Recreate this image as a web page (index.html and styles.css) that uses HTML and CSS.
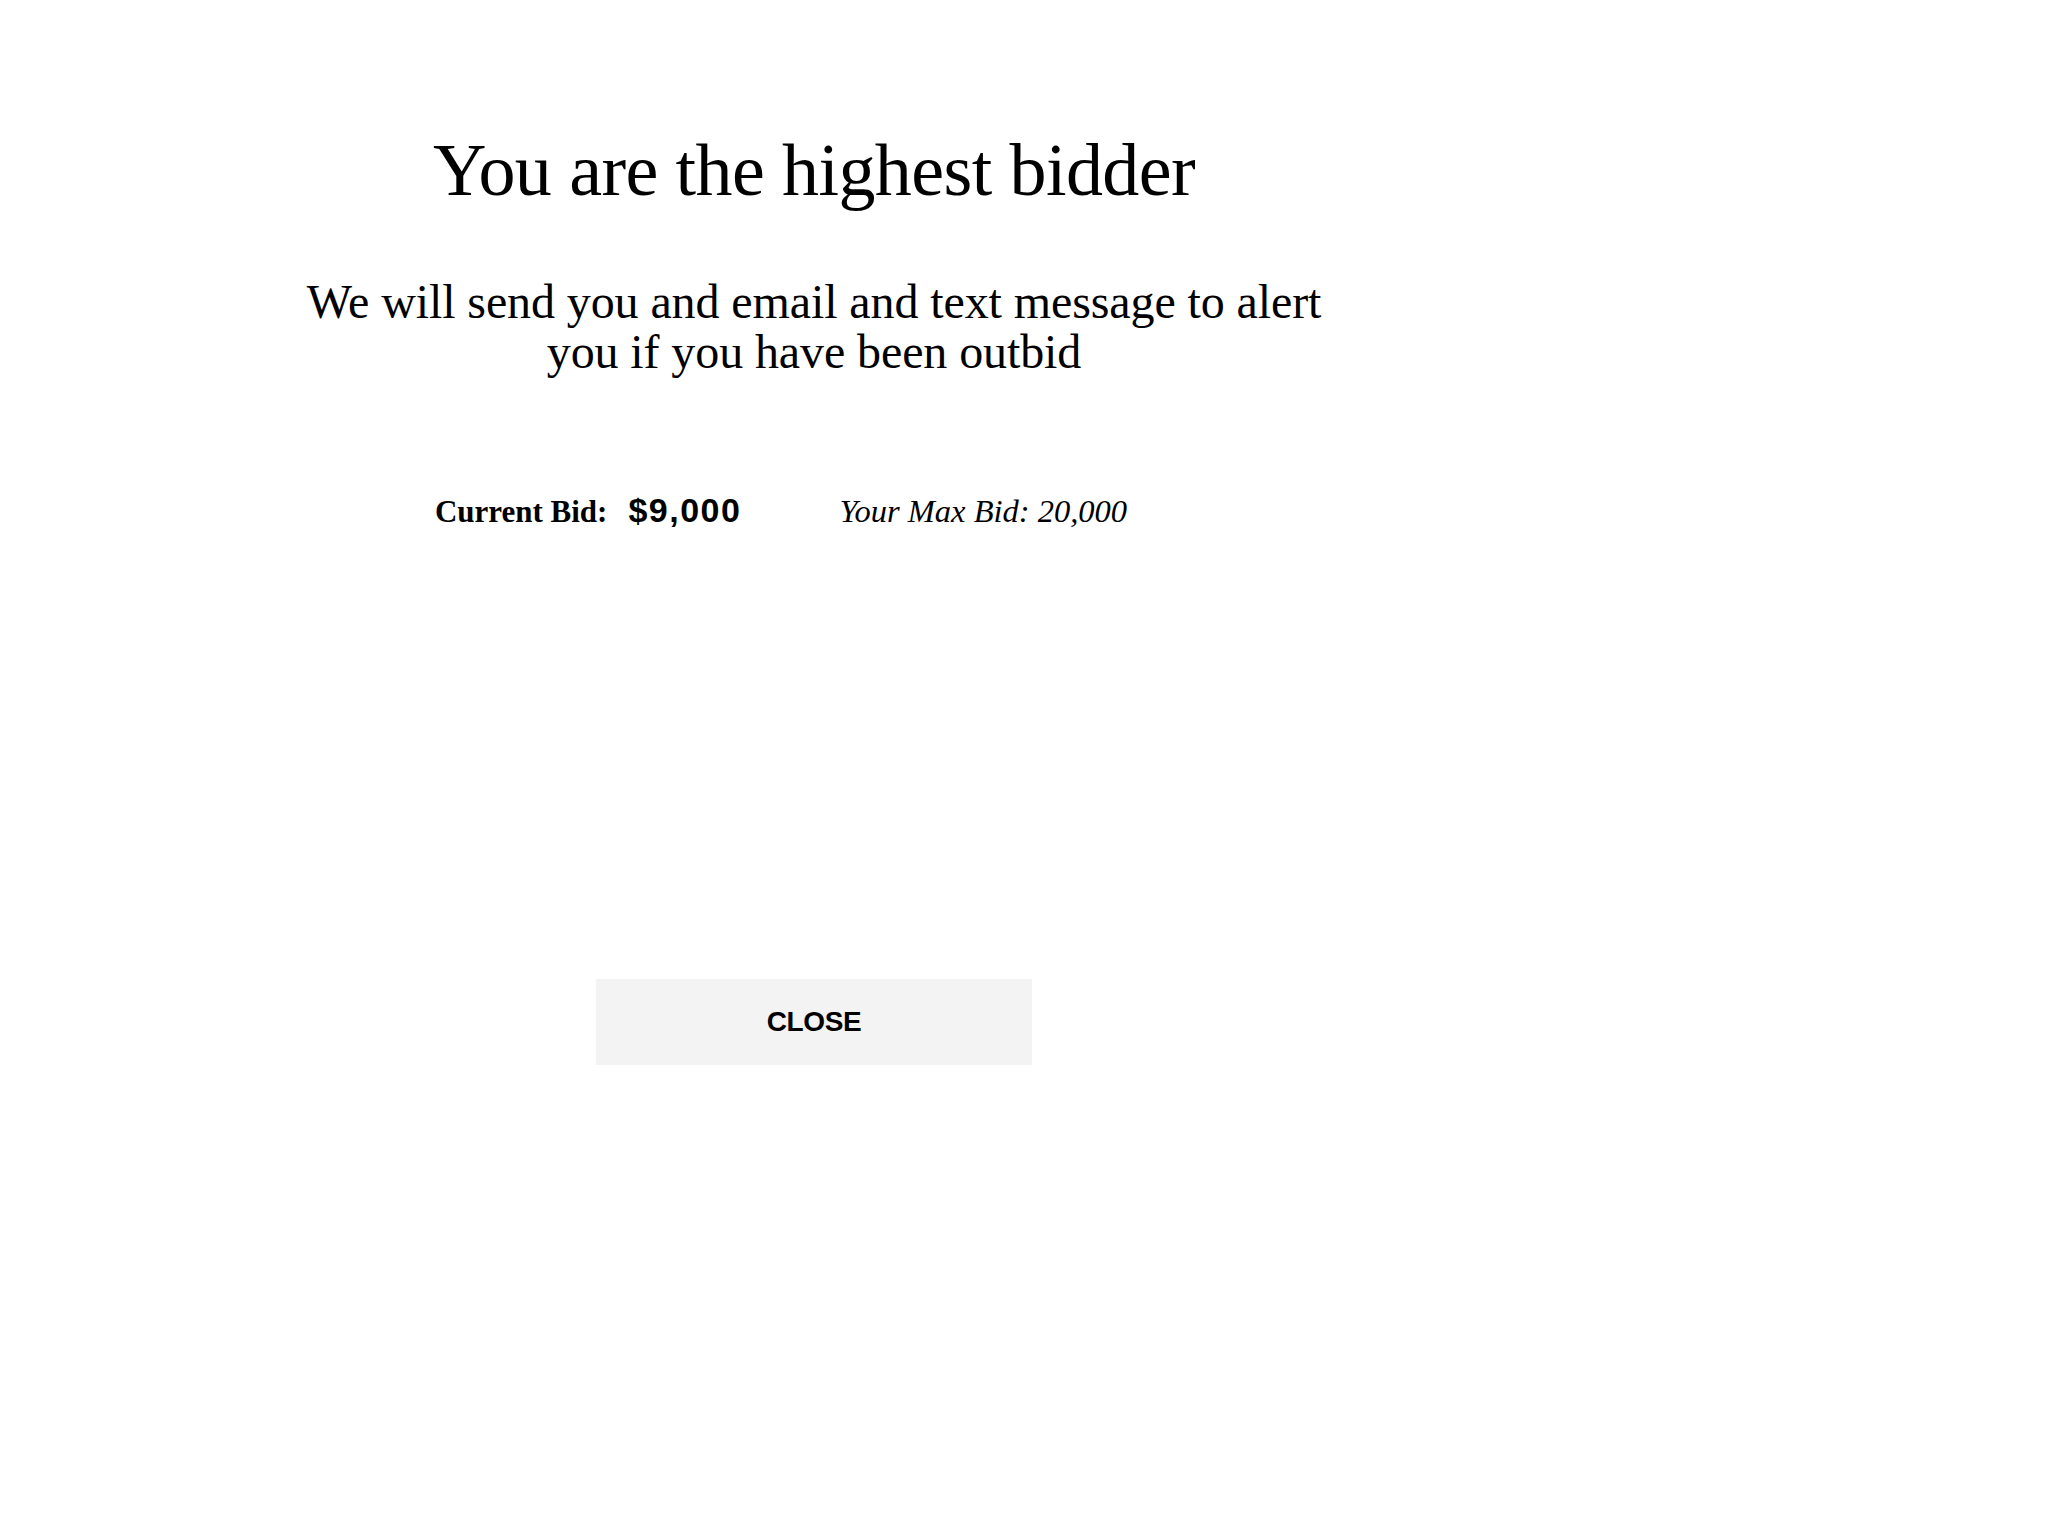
FILE: index.html
```html
<!DOCTYPE html>
<html lang="en">
<head>
<meta charset="utf-8">
<title>You are the highest bidder</title>
<link rel="stylesheet" href="styles.css">
</head>
<body>
<main class="modal">
  <h1 class="title">You are the highest bidder</h1>
  <p class="subtitle">We will send you and email and text message to alert you if you have been outbid</p>
  <div class="bids">
    <div class="current">
      <span class="current-label">Current Bid:</span>
      <span class="current-value">$9,000</span>
    </div>
    <span class="max-bid">Your Max Bid: 20,000</span>
  </div>
  <button class="close-btn" type="button">CLOSE</button>
</main>
</body>
</html>
```

FILE: styles.css
```css
html, body {
  margin: 0;
  padding: 0;
  background: #ffffff;
  color: #000000;
}

.modal {
  width: 1628px;
  display: flex;
  flex-direction: column;
  align-items: center;
  padding-top: 125px;
}

.title {
  margin: 0;
  font-family: "Liberation Serif", "Times New Roman", serif;
  font-weight: normal;
  font-size: 74px;
  line-height: 90px;
  letter-spacing: -0.6px;
  text-align: center;
}

.subtitle {
  margin: 62px 0 0;
  width: 1050px;
  font-family: "Liberation Serif", "Times New Roman", serif;
  font-size: 48px;
  line-height: 50px;
  letter-spacing: -0.1px;
  text-align: center;
}

.bids {
  margin-top: 113px;
  display: flex;
  align-items: baseline;
  gap: 98px;
  margin-right: 66px;
}

.current {
  display: flex;
  align-items: baseline;
  gap: 21px;
}

.current-label {
  font-family: "Liberation Serif", "Times New Roman", serif;
  font-weight: bold;
  font-size: 31px;
  line-height: 40px;
}

.current-value {
  font-family: "Liberation Sans", Arial, sans-serif;
  font-weight: bold;
  font-size: 34px;
  line-height: 40px;
  letter-spacing: 1.5px;
}

.max-bid {
  font-family: "Liberation Serif", "Times New Roman", serif;
  font-style: italic;
  font-size: 32.5px;
  line-height: 40px;
}

.close-btn {
  margin-top: 447px;
  width: 436px;
  height: 86px;
  border: none;
  background: #f3f3f3;
  font-family: "Liberation Sans", Arial, sans-serif;
  font-weight: bold;
  font-size: 28px;
  letter-spacing: -0.4px;
  color: #000000;
  padding: 0;
}
```
